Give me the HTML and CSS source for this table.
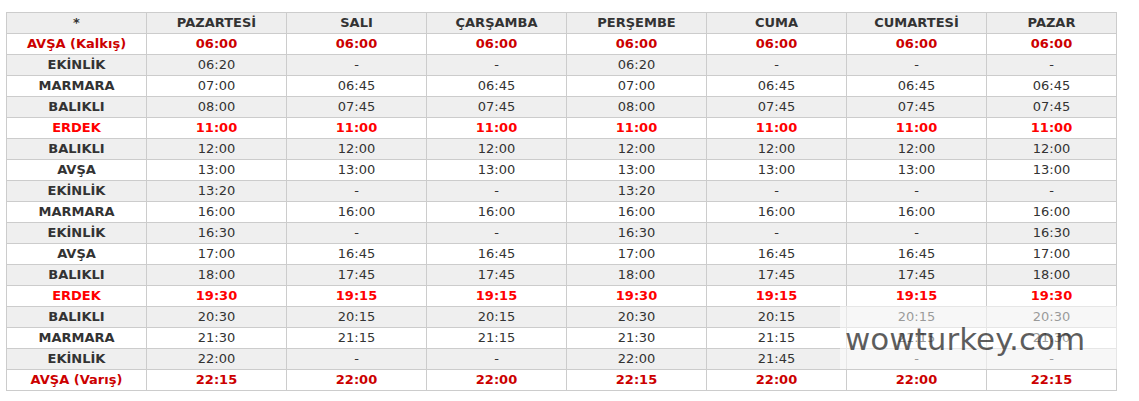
FILE: index.html
```html
<!DOCTYPE html>
<html lang="tr">
<head>
<meta charset="utf-8">
<title>Avşa Feribot Saatleri</title>
<link rel="stylesheet" href="styles.css">
</head>
<body>
<div class="wrap">
<table class="sched">
<colgroup>
<col class="c"><col class="c"><col class="c"><col class="c"><col class="c"><col class="c"><col class="c"><col class="last">
</colgroup>
<thead>
<tr><th>*</th><th>PAZARTESİ</th><th>SALI</th><th>ÇARŞAMBA</th><th>PERŞEMBE</th><th>CUMA</th><th>CUMARTESİ</th><th>PAZAR</th></tr>
</thead>
<tbody>
<tr class="dk"><th>AVŞA (Kalkış)</th><td>06:00</td><td>06:00</td><td>06:00</td><td>06:00</td><td>06:00</td><td>06:00</td><td>06:00</td></tr>
<tr><th>EKİNLİK</th><td>06:20</td><td>-</td><td>-</td><td>06:20</td><td>-</td><td>-</td><td>-</td></tr>
<tr><th>MARMARA</th><td>07:00</td><td>06:45</td><td>06:45</td><td>07:00</td><td>06:45</td><td>06:45</td><td>06:45</td></tr>
<tr><th>BALIKLI</th><td>08:00</td><td>07:45</td><td>07:45</td><td>08:00</td><td>07:45</td><td>07:45</td><td>07:45</td></tr>
<tr class="br"><th>ERDEK</th><td>11:00</td><td>11:00</td><td>11:00</td><td>11:00</td><td>11:00</td><td>11:00</td><td>11:00</td></tr>
<tr><th>BALIKLI</th><td>12:00</td><td>12:00</td><td>12:00</td><td>12:00</td><td>12:00</td><td>12:00</td><td>12:00</td></tr>
<tr><th>AVŞA</th><td>13:00</td><td>13:00</td><td>13:00</td><td>13:00</td><td>13:00</td><td>13:00</td><td>13:00</td></tr>
<tr><th>EKİNLİK</th><td>13:20</td><td>-</td><td>-</td><td>13:20</td><td>-</td><td>-</td><td>-</td></tr>
<tr><th>MARMARA</th><td>16:00</td><td>16:00</td><td>16:00</td><td>16:00</td><td>16:00</td><td>16:00</td><td>16:00</td></tr>
<tr><th>EKİNLİK</th><td>16:30</td><td>-</td><td>-</td><td>16:30</td><td>-</td><td>-</td><td>16:30</td></tr>
<tr><th>AVŞA</th><td>17:00</td><td>16:45</td><td>16:45</td><td>17:00</td><td>16:45</td><td>16:45</td><td>17:00</td></tr>
<tr><th>BALIKLI</th><td>18:00</td><td>17:45</td><td>17:45</td><td>18:00</td><td>17:45</td><td>17:45</td><td>18:00</td></tr>
<tr class="br"><th>ERDEK</th><td>19:30</td><td>19:15</td><td>19:15</td><td>19:30</td><td>19:15</td><td>19:15</td><td>19:30</td></tr>
<tr><th>BALIKLI</th><td>20:30</td><td>20:15</td><td>20:15</td><td>20:30</td><td>20:15</td><td>20:15</td><td>20:30</td></tr>
<tr><th>MARMARA</th><td>21:30</td><td>21:15</td><td>21:15</td><td>21:30</td><td>21:15</td><td>21:15</td><td>21:30</td></tr>
<tr><th>EKİNLİK</th><td>22:00</td><td>-</td><td>-</td><td>22:00</td><td>21:45</td><td>-</td><td>-</td></tr>
<tr class="dk"><th>AVŞA (Varış)</th><td>22:15</td><td>22:00</td><td>22:00</td><td>22:15</td><td>22:00</td><td>22:00</td><td>22:15</td></tr>
</tbody>
</table>
<div class="wm">wowturkey.com</div>
</div>
</body>
</html>
```
FILE: styles.css
```css
html, body {
  margin: 0;
  padding: 0;
  background: #ffffff;
}
.wrap {
  position: relative;
  padding: 12px 0 0 6px;
}
.sched {
  border-collapse: collapse;
  table-layout: fixed;
  width: 1111px;
  font-family: "DejaVu Sans", "Liberation Sans", sans-serif;
  font-size: 13px;
  color: #333333;
}
.sched col.c { width: 140px; }
.sched th, .sched td {
  border: 1px solid #cccccc;
  height: 20px;
  padding: 0 4px;
  text-align: center;
  line-height: 18px;
  white-space: nowrap;
}
.sched th { font-weight: bold; }
.sched td { font-weight: normal; }
.sched thead th { background: #eeeeee; }
.sched tbody tr { background: #ffffff; }
.sched tbody tr:nth-child(even) { background: #efefef; }
.sched tr.dk th, .sched tr.dk td {
  color: #cc0000;
  font-weight: bold;
}
.sched tr.br th, .sched tr.br td {
  color: #ff0000;
  font-weight: bold;
}
.wm {
  position: absolute;
  left: 840px;
  top: 306px;
  width: 280px;
  height: 63px;
  background: rgba(255, 255, 255, 0.5);
  color: rgba(30, 30, 30, 0.72);
  font-family: "DejaVu Sans", sans-serif;
  font-size: 31px;
  line-height: 66px;
  padding-left: 5px;
  box-sizing: border-box;
  white-space: nowrap;
}
```
